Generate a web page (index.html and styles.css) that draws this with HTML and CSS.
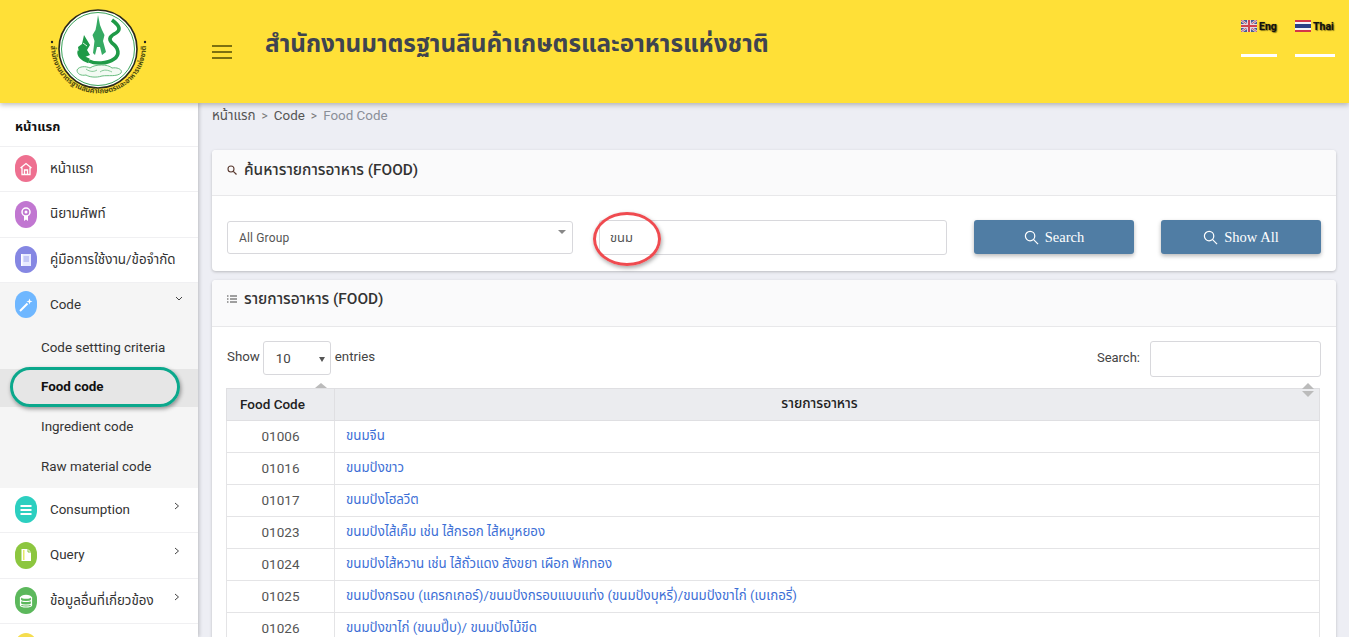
FILE: index.html
```html
<!DOCTYPE html>
<html lang="th">
<head>
<meta charset="utf-8">
<title>Food Code</title>
<link rel="stylesheet" href="styles.css">
</head>
<body>
<header class="topbar">
  <div class="logo-wrap">
    <svg class="logo" viewBox="40 5 115 100" width="115" height="100">
      <defs><path id="arc" d="M51 49 A47.5 47.5 0 0 0 146 49"/></defs>
      <circle cx="98" cy="52" r="39" fill="#fff" stroke="#2a2a1a" stroke-width="1.6"/>
      <circle cx="98" cy="52" r="36.5" fill="none" stroke="#3aa35a" stroke-width="1"/>
      <path d="M112 23 C120 29 121 33 116 36 C110 39 108 42 112 46 C119 51 120 58 114 62 C107 67 95 67 89 64" fill="none" stroke="#1f9a47" stroke-width="3.600"/>
      <path d="M89 64 C83 62 79 58 80 54" fill="none" stroke="#1f9a47" stroke-width="5"/>
      <path d="M98 18 L100 28 L102 33 L104.500 38 L103 44 L106 55 L102 58 L100 50 L97 50 L95 58 L93 56 L94.500 44 L92.500 38 L95.500 33 L96.500 28Z" fill="#35aa63"/>
      <path d="M84 38 L87 43 L90 48 L87 53 L90 58 L85 60 L79 56 L78 50 L82 47Z" fill="#1f9a47"/>
      <path d="M83 46 L87 49" stroke="#dff2e2" stroke-width="1"/>
      <path d="M77 73 C79 69 86 69 90 71 C95 67 108 67 112 71 C118 70 123 73 121 76 C117 80 108 78 102 79 C96 81 89 80 86 78 C81 79 77 77 77 73Z" fill="#f3faf3" stroke="#69bd80" stroke-width="1"/>
      <path d="M86 72 C90 75 94 75 97 73 M100 75 C104 72 108 73 112 75" fill="none" stroke="#69bd80" stroke-width=".8"/>
      <circle cx="52" cy="45" r="1.2" fill="#222"/>
      <circle cx="145" cy="45" r="1.2" fill="#222"/>
      <text class="logo-text"><textPath href="#arc" startOffset="50%" text-anchor="middle">สำนักงานมาตรฐานสินค้าเกษตรและอาหารแห่งชาติ</textPath></text>
    </svg>
  </div>
  <button class="burger" aria-label="menu"><span></span><span></span><span></span></button>
  <h1 class="site-title">สำนักงานมาตรฐานสินค้าเกษตรและอาหารแห่งชาติ</h1>
  <nav class="langs">
    <a class="lang lang-en">
      <span class="lang-label">
        <svg class="flag" viewBox="0 0 16 12" width="16" height="12"><rect width="16" height="12" fill="#4a5a94"/><path d="M0 0L16 12M16 0L0 12" stroke="#d8d8e4" stroke-width="2.400"/><path d="M0 0L16 12M16 0L0 12" stroke="#c9566a" stroke-width="1"/><path d="M8 0V12M0 6H16" stroke="#e4dbe0" stroke-width="4"/><path d="M8 0V12M0 6H16" stroke="#cf4350" stroke-width="2"/></svg>
        <span class="lang-text">Eng</span>
      </span>
    </a>
    <a class="lang lang-th">
      <span class="lang-label">
        <svg class="flag" viewBox="0 0 16 12" width="16" height="12"><rect width="16" height="12" fill="#d3364a"/><rect y="2" width="16" height="8" fill="#f4f4f8"/><rect y="4" width="16" height="4" fill="#2b3f86"/></svg>
        <span class="lang-text">Thai</span>
      </span>
    </a>
  </nav>
</header>

<div class="layout">
  <aside class="sidebar">
    <div class="side-title">หน้าแรก</div>
    <ul class="menu">
      <li class="menu-item">
        <span class="badge badge-pink"><svg viewBox="0 0 16 16" width="16" height="16"><path d="M2.500 7L8 2.500 13.500 7M4 6.500V13.500H12V6.500M6.500 13.500V9H9.500V13.500" fill="none" stroke="#fff" stroke-width="1.300"/></svg></span>
        <span class="menu-label">หน้าแรก</span>
      </li>
      <li class="menu-item">
        <span class="badge badge-purple"><svg viewBox="0 0 16 16" width="16" height="16"><circle cx="8" cy="6" r="4" fill="none" stroke="#fff" stroke-width="1.500"/><circle cx="8" cy="6" r="1.500" fill="#fff"/><path d="M6 10V15L8 13.500 10 15V10" fill="#fff"/></svg></span>
        <span class="menu-label">นิยามศัพท์</span>
      </li>
      <li class="menu-item">
        <span class="badge badge-indigo"><svg viewBox="0 0 16 16" width="16" height="16"><rect x="3" y="2" width="10" height="12" fill="#e8ebff"/><rect x="5.500" y="4" width="5.500" height="6" fill="#c3c7f6"/><rect x="3" y="2" width="1.500" height="12" fill="#fff"/></svg></span>
        <span class="menu-label">คู่มือการใช้งาน/ข้อจำกัด</span>
      </li>
      <li class="menu-group">
        <div class="menu-item menu-item-open">
          <span class="badge badge-blue"><svg viewBox="0 0 16 16" width="16" height="16"><path d="M2 14L9.500 6.500" stroke="#fff" stroke-width="2"/><path d="M11.500 1.500L12.300 3.700 14.500 4.500 12.300 5.300 11.500 7.500 10.700 5.300 8.500 4.500 10.700 3.700Z" fill="#fff"/></svg></span>
          <span class="menu-label">Code</span>
          <svg class="chev chev-down" viewBox="0 0 8 6" width="8" height="6"><path d="M1 1L4 4 7 1" fill="none" stroke="#444" stroke-width="1"/></svg>
        </div>
        <ul class="submenu">
          <li class="sub-item">Code settting criteria</li>
          <li class="sub-item sub-active">Food code</li>
          <li class="sub-item">Ingredient code</li>
          <li class="sub-item">Raw material code</li>
        </ul>
      </li>
      <li class="menu-item">
        <span class="badge badge-teal"><svg viewBox="0 0 16 16" width="16" height="16"><path d="M2.500 4H13.500M2.500 8H13.500M2.500 12H13.500" stroke="#fff" stroke-width="2"/></svg></span>
        <span class="menu-label">Consumption</span>
        <svg class="chev" viewBox="0 0 6 8" width="6" height="8"><path d="M1 1L4.500 4 1 7" fill="none" stroke="#444" stroke-width="1"/></svg>
      </li>
      <li class="menu-item">
        <span class="badge badge-lime"><svg viewBox="0 0 16 16" width="16" height="16"><path d="M3.500 2H10L13 5V14H3.500Z" fill="#fff"/><rect x="5" y="3" width="1.500" height="10" fill="#e6e86a"/><path d="M10 2V5H13" fill="none" stroke="#8cc63f" stroke-width="1"/></svg></span>
        <span class="menu-label">Query</span>
        <svg class="chev" viewBox="0 0 6 8" width="6" height="8"><path d="M1 1L4.500 4 1 7" fill="none" stroke="#444" stroke-width="1"/></svg>
      </li>
      <li class="menu-item">
        <span class="badge badge-green"><svg viewBox="0 0 16 16" width="16" height="16"><ellipse cx="8" cy="3.800" rx="5.500" ry="2" fill="#fff"/><path d="M2.500 7C3.500 9 12.500 9 13.500 7M2.500 10.500C3.500 12.500 12.500 12.500 13.500 10.500M2.500 4V12.500C3.500 14.500 12.500 14.500 13.500 12.500V4" fill="none" stroke="#fff" stroke-width="1.200"/></svg></span>
        <span class="menu-label">ข้อมูลอื่นที่เกี่ยวข้อง</span>
        <svg class="chev" viewBox="0 0 6 8" width="6" height="8"><path d="M1 1L4.500 4 1 7" fill="none" stroke="#444" stroke-width="1"/></svg>
      </li>
      <li class="menu-item">
        <span class="badge badge-yellow"></span>
      </li>
    </ul>
    <span class="mark-teal"></span>
  </aside>

  <main class="content">
    <div class="crumbs"><span class="crumb">หน้าแรก</span><span class="sep">&gt;</span><span class="crumb">Code</span><span class="sep">&gt;</span><span class="crumb crumb-now">Food Code</span></div>

    <section class="card">
      <div class="card-head">
        <svg class="head-icon" viewBox="0 0 10 10" width="10" height="10"><circle cx="4" cy="4" r="3" fill="none" stroke="#5a3a30" stroke-width="1.100"/><path d="M6.300 6.300L9.500 9.500" stroke="#5a3a30" stroke-width="1.200"/></svg>
        <h2 class="card-title">ค้นหารายการอาหาร (FOOD)</h2>
      </div>
      <div class="search-row">
        <div class="select-box"><span>All Group</span><i class="caret"></i></div>
        <div class="text-box">ขนม<span class="mark-red"></span></div>
        <button class="btn"><svg viewBox="0 0 16 16" width="15" height="15"><circle cx="6.500" cy="6.500" r="5" fill="none" stroke="#fff" stroke-width="1.300"/><path d="M10 10L15 15" stroke="#fff" stroke-width="1.300"/></svg>Search</button>
        <button class="btn"><svg viewBox="0 0 16 16" width="15" height="15"><circle cx="6.500" cy="6.500" r="5" fill="none" stroke="#fff" stroke-width="1.300"/><path d="M10 10L15 15" stroke="#fff" stroke-width="1.300"/></svg>Show All</button>
      </div>
    </section>

    <section class="card card-list">
      <div class="card-head">
        <svg class="head-icon" viewBox="0 0 10 8" width="10" height="8"><path d="M0 1H1.500M0 4H1.500M0 7H1.500M3 1H10M3 4H10M3 7H10" stroke="#444" stroke-width="1"/></svg>
        <h2 class="card-title">รายการอาหาร (FOOD)</h2>
      </div>
      <div class="table-tools">
        <div class="tool-left">Show<div class="len-box"><span>10</span><i class="len-caret"></i></div>entries</div>
        <div class="tool-right">Search:<div class="filter-box"></div></div>
      </div>
      <div class="table-wrap">
        <i class="sort-up"></i>
        <i class="sort-both"></i>
        <table class="grid">
          <thead><tr><th class="col-code">Food Code</th><th>รายการอาหาร</th></tr></thead>
          <tbody>
            <tr><td class="code">01006</td><td><a>ขนมจีน</a></td></tr>
            <tr><td class="code">01016</td><td><a>ขนมปังขาว</a></td></tr>
            <tr><td class="code">01017</td><td><a>ขนมปังโฮลวีต</a></td></tr>
            <tr><td class="code">01023</td><td><a>ขนมปังไส้เค็ม เช่น ไส้กรอก ไส้หมูหยอง</a></td></tr>
            <tr><td class="code">01024</td><td><a>ขนมปังไส้หวาน เช่น ไส้ถั่วแดง สังขยา เผือก ฟักทอง</a></td></tr>
            <tr><td class="code">01025</td><td><a>ขนมปังกรอบ (แครกเกอร์)/ขนมปังกรอบแบบแท่ง (ขนมปังบุหรี่)/ขนมปังขาไก่ (เบเกอรี่)</a></td></tr>
            <tr><td class="code">01026</td><td><a>ขนมปังขาไก่ (ขนมปี๊บ)/ ขนมปังไม้ขีด</a></td></tr>
          </tbody>
        </table>
      </div>
    </section>
  </main>
</div>
</body>
</html>
```
FILE: styles.css
```css
* { box-sizing: border-box; }
html, body { margin: 0; height: 637px; overflow: hidden; }
body { font-family: Roboto, "Noto Sans Thai", "Noto Sans", sans-serif; font-size: 13px; color: #444; background: #edeef4; }
ul { list-style: none; margin: 0; padding: 0; }
h1, h2 { margin: 0; }

.topbar { height: 103px; background: #ffe037; display: flex; align-items: flex-start; box-shadow: 0 2px 5px rgba(0,0,0,.25); position: relative; z-index: 2; }
.logo-wrap { width: 212px; padding: 2px 0 0 40px; flex: none; }
.logo { display: block; }
.logo-text { font-size: 7.200px; font-weight: 700; fill: #4d4a10; }
.burger { flex: none; width: 20px; height: 14px; margin: 45px 33px 0 0; padding: 0; border: 0; background: none; display: flex; flex-direction: column; justify-content: space-between; }
.burger span { display: block; height: 2px; background: #7d7110; }
.site-title { font-size: 24.300px; font-weight: 700; color: #3f4450; line-height: 30px; margin-top: 29px; flex: 1; }
.langs { display: flex; gap: 18px; margin: 20px 14px 0 0; }
.lang { display: block; height: 37px; border-bottom: 3px solid #fff; }
.lang-en { width: 36px; }
.lang-th { width: 40px; }
.lang-label { display: flex; align-items: center; gap: 2px; font-size: 10.500px; font-weight: 700; color: #111; text-shadow: 1px 1px 1px rgba(60,50,0,.6), 0 0 1px rgba(60,50,0,.6); line-height: 12px; white-space: nowrap; }
.lang-text { position: relative; top: 1px; }
.flag { flex: none; }

.layout { display: flex; height: 534px; overflow: hidden; }
.sidebar { width: 198px; flex: none; background: #fff; box-shadow: 1px 0 4px rgba(0,0,0,.22); position: relative; z-index: 1; font-size: 13.400px; overflow: hidden; }
.side-title { height: 43.500px; padding: 15px 0 0 15px; font-size: 13px; font-weight: 700; color: #111; line-height: 18px; border-bottom: 1px solid #f0f0f2; }
.menu-item { height: 45.500px; display: flex; align-items: center; padding: 0 18px 0 15px; border-bottom: 1px solid #f0f0f2; color: #333; position: relative; }
.menu-item-open { border-bottom: 0; height: 43px; padding-right: 15px; }
.menu-group { background: #f5f5f5; height: 204.500px; }
.menu-label { margin-left: 13px; line-height: 18px; white-space: nowrap; }
.badge { flex: none; width: 22px; height: 27px; border-radius: 11px / 12px; display: flex; align-items: center; justify-content: center; }
.badge-pink { background: #ee7090; }
.badge-purple { background: #c177d1; }
.badge-indigo { background: #8587e3; }
.badge-blue { background: #6fb7ff; }
.badge-teal { background: #2ccfc0; }
.badge-lime { background: #8cc63f; }
.badge-green { background: #5cb85c; }
.badge-yellow { background: #f5dd4e; }
.chev { margin-left: auto; align-self: flex-start; margin-top: 14px; }
.chev-down { margin-top: 13px; }
.submenu { padding-top: 2px; }
.sub-item { height: 40px; padding-left: 41px; line-height: 39px; color: #333; white-space: nowrap; }
.sub-active { height: 38px; line-height: 35px; margin-top: 1px; background: #e6e6e6; color: #111; font-weight: 700; }
.mark-teal { position: absolute; left: 10px; top: 264px; width: 170px; height: 40px; border: 3px solid #0ba88c; border-radius: 20px; box-shadow: 1px 2px 4px rgba(0,0,0,.4); }

.content { flex: 1; padding: 0 13px 0 14px; min-width: 0; overflow: hidden; }
.crumbs { height: 47px; padding-top: 4px; display: flex; gap: 6px; font-size: 13.400px; line-height: 18px; color: #555; }
.sep { color: #777; font-size: 12px; }
.crumb-now { color: #8a8f98; }
.card { background: #fff; border-radius: 4px; box-shadow: 0 1px 3px rgba(0,0,0,.22); }
.card-list { margin-top: 9px; }
.card-head { height: 46px; display: flex; align-items: center; gap: 7px; padding: 0 0 6px 15px; background: #fafafb; border-bottom: 1px solid #e8e8ea; border-radius: 4px 4px 0 0; }
.card-list .card-head { height: 47px; padding-bottom: 8px; }
.head-icon { flex: none; }
.card-title { font-size: 15.400px; font-weight: 500; color: #333; line-height: 20px; }
.search-row { height: 75px; padding: 24px 15px 0; display: flex; align-items: flex-start; }
.select-box { width: 346px; height: 33px; margin-top: 1px; border: 1px solid #d8d8dc; border-radius: 3px; padding-left: 11px; display: flex; align-items: center; font-size: 12px; color: #555; letter-spacing: .15px; position: relative; }
.caret { position: absolute; right: 6px; top: 8px; border: 4px solid transparent; border-top: 4px solid #888; border-bottom: 0; }
.text-box { width: 348px; height: 35px; margin-left: 26px; border: 1px solid #d8d8dc; border-radius: 3px; padding-left: 10px; line-height: 33px; font-size: 13px; color: #555; position: relative; }
.mark-red { position: absolute; left: -7px; top: -9px; width: 68px; height: 54px; border: 3px solid #ef4b50; border-radius: 50%; box-shadow: 1px 2px 4px rgba(0,0,0,.35); }
.btn { width: 160px; height: 34px; margin-left: 27px; border: 0; border-radius: 3px; background: #507da4; color: #fff; font-family: "Liberation Serif", serif; font-size: 14.500px; display: flex; align-items: center; justify-content: center; gap: 6px; box-shadow: 0 2px 4px rgba(0,0,0,.28); }

.table-tools { display: flex; justify-content: space-between; padding: 14px 15px 0 15px; height: 61px; }
.tool-left { display: flex; align-items: flex-start; gap: 3px; line-height: 31px; font-size: 13.300px; }
.len-box { width: 68px; height: 34px; margin-right: 1px; border: 1px solid #d8d8dc; border-radius: 3px; padding-left: 12px; line-height: 34px; position: relative; }
.len-caret { position: absolute; right: 5px; top: 15px; border: 3.500px solid transparent; border-top: 5px solid #555; border-bottom: 0; }
.tool-right { display: flex; align-items: flex-start; gap: 10px; line-height: 33px; }
.filter-box { width: 171px; height: 36px; border: 1px solid #d8d8dc; border-radius: 3px; }
.table-wrap { margin: 0 16px 0 14px; position: relative; }
.sort-up { position: absolute; left: 89px; top: -5px; border: 6px solid transparent; border-bottom: 5px solid #bbb; border-top: 0; }
.sort-both { position: absolute; right: 6px; top: -5px; width: 12px; height: 14px; }
.sort-both::before { content: ""; position: absolute; left: 0; top: 0; border: 6px solid transparent; border-bottom: 6px solid #bbb; border-top: 0; }
.sort-both::after { content: ""; position: absolute; left: 0; bottom: 0; border: 6px solid transparent; border-top: 6px solid #bbb; border-bottom: 0; }
.grid { width: 100%; border-collapse: collapse; table-layout: fixed; }
.grid th { height: 32px; background: #ebecef; border: 1px solid #dfdfe2; font-size: 13.800px; font-weight: 500; color: #222; padding: 0 15px 2px 0; }
.grid th.col-code { width: 108px; padding-right: 16px; font-size: 13.500px; white-space: nowrap; }
.grid td { height: 32px; border: 1px solid #e4e4e6; padding: 0 11px 1px; font-size: 13.300px; line-height: 18px; }
.grid td.code { text-align: center; font-size: 13.500px; color: #555; padding: 0 0 2px; }
.grid a { color: #3d6fd6; }
```
